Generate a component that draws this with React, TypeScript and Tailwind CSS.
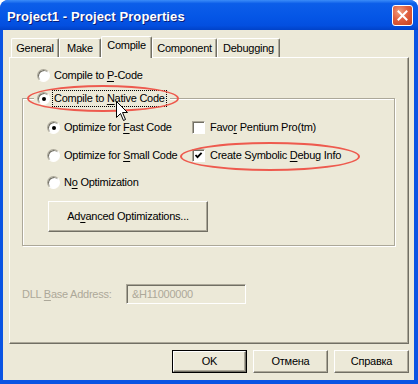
import React from "react";

const U = ({ children }: { children: React.ReactNode }) => (
  <span className="underline underline-offset-[2px] decoration-[1px]">{children}</span>
);

const Radio = ({ checked }: { checked?: boolean }) => (
  <span className="w-[13px] h-[13px] shrink-0 rounded-full bg-white border border-t-[#ACA899] border-l-[#ACA899] border-r-white border-b-white shadow-[inset_1px_1px_0_#716F64] flex items-center justify-center">
    {checked && <span className="w-[4px] h-[4px] rounded-full bg-black" />}
  </span>
);

const Check = ({ checked }: { checked?: boolean }) => (
  <span className="w-[13px] h-[13px] shrink-0 bg-white border border-t-[#ACA899] border-l-[#ACA899] border-r-white border-b-white shadow-[inset_1px_1px_0_#716F64] flex items-center justify-center">
    {checked && (
      <svg width="9" height="9" viewBox="0 0 9 9">
        <path d="M1.5 4 L3.5 6.2 L7.6 1.8" fill="none" stroke="#000" strokeWidth="1.8" />
      </svg>
    )}
  </span>
);

const Btn = ({ children, def, w }: { children: React.ReactNode; def?: boolean; w: string }) => (
  <div className={`${w} ${def ? "border border-black" : ""} flex`}>
    <div className="flex-1 flex items-center justify-center bg-[#ECE9D8] border border-t-white border-l-white border-r-[#716F64] border-b-[#716F64] shadow-[inset_-1px_-1px_0_#ACA899]">
      {children}
    </div>
  </div>
);

const Tab = ({ label, w, active }: { label: string; w: string; active?: boolean }) =>
  active ? (
    <div
      className={`${w} h-[22px] -mb-px relative z-10 bg-[#ECE9D8] border-t border-l border-white border-r border-r-[#716F64] rounded-t-[2px] shadow-[inset_-1px_0_0_#ACA899] flex justify-center pt-[2px]`}
    >
      {label}
    </div>
  ) : (
    <div
      className={`${w} h-[19px] mt-[2px] bg-[#ECE9D8] border-t border-l border-white border-r border-r-[#716F64] rounded-t-[2px] shadow-[inset_-1px_0_0_#ACA899] flex items-center justify-center`}
    >
      {label}
    </div>
  );

export default function App() {
  return (
    <div className="relative w-[418px] h-[384px] bg-[#0A54E3] rounded-t-[8px] flex flex-col text-[11px] leading-[13px] tracking-[-0.25px] text-black font-['Liberation_Sans',Arial,sans-serif] overflow-hidden">
      {/* title bar */}
      <div className="h-[30px] shrink-0 rounded-t-[8px] bg-[linear-gradient(180deg,#3b8cf8_0%,#0c5ee9_12%,#0556e6_55%,#034fe0_85%,#0142c8_100%)] flex items-center pl-[7px] pr-[5px]">
        <span className="text-white font-bold text-[13px] tracking-[0.1px] [text-shadow:1px_1px_0_#0a1e7a] mt-[2px]">
          Project1 - Project Properties
        </span>
        <div className="ml-auto w-[21px] h-[21px] mt-[1px] rounded-[3px] border border-white bg-[radial-gradient(circle_at_35%_30%,#f0a080_0%,#e06040_45%,#c8401c_100%)] flex items-center justify-center">
          <svg width="11" height="11" viewBox="0 0 11 11">
            <path d="M1.5 1.5 L9.5 9.5 M9.5 1.5 L1.5 9.5" stroke="#fff" strokeWidth="2" strokeLinecap="square" />
          </svg>
        </div>
      </div>

      {/* body */}
      <div className="ml-[3px] mr-[4px] mb-[4px] flex-1 bg-[#ECE9D8] flex flex-col pt-[6px]">
        {/* tabs */}
        <div className="flex pl-[8px] h-[21px]">
          <Tab label="General" w="w-[48px]" />
          <Tab label="Make" w="w-[42px]" />
          <Tab label="Compile" w="w-[51px]" active />
          <Tab label="Component" w="w-[65px]" />
          <Tab label="Debugging" w="w-[63px]" />
        </div>

        {/* tab panel */}
        <div className="ml-[6px] w-[400px] h-[287px] border-t border-l border-white border-r border-b border-r-[#716F64] border-b-[#716F64] shadow-[inset_-1px_-1px_0_#ACA899] flex flex-col">
          <div className="flex items-center gap-[4px] ml-[27px] mt-[11px]">
            <Radio />
            <span>
              Compile to <U>P</U>-Code
            </span>
          </div>

          <fieldset className="ml-[12px] mt-[8px] w-[373px] border border-[#ACA899] shadow-[inset_1px_1px_0_#fff,1px_1px_0_#fff] pb-[13px]">
            <legend className="ml-[11px] px-[3px] bg-[#ECE9D8] flex items-center">
              <Radio checked />
              <span className="ml-[2px] px-[1px] py-[1px] border border-dotted border-black">
                Compile to <U>N</U>ative Code
              </span>
            </legend>

            <div className="flex flex-col mt-[14px] pl-[24px]">
              <div className="flex items-center h-[13px]">
                <div className="w-[145px] flex items-center gap-[4px]">
                  <Radio checked />
                  <span>
                    Optimize for <U>F</U>ast Code
                  </span>
                </div>
                <div className="flex items-center gap-[5px]">
                  <Check />
                  <span>
                    Favo<U>r</U> Pentium Pro(tm)
                  </span>
                </div>
              </div>
              <div className="flex items-center h-[13px] mt-[15px]">
                <div className="w-[145px] flex items-center gap-[4px]">
                  <Radio />
                  <span>
                    Optimize for <U>S</U>mall Code
                  </span>
                </div>
                <div className="flex items-center gap-[5px]">
                  <Check checked />
                  <span>
                    Create Symbolic <U>D</U>ebug Info
                  </span>
                </div>
              </div>
              <div className="flex items-center h-[13px] mt-[14px] gap-[4px]">
                <Radio />
                <span>
                  N<U>o</U> Optimization
                </span>
              </div>
              <div className="mt-[12px] ml-[1px]">
                <Btn w="w-[160px] h-[31px]">
                  <span>
                    Ad<U>v</U>anced Optimizations...
                  </span>
                </Btn>
              </div>
            </div>
          </fieldset>

          <div className="flex items-center ml-[12px] mt-[38px] text-[#ACA899]">
            <span className="w-[104px]">
              DLL <U>B</U>ase Address:
            </span>
            <div className="w-[120px] h-[20px] border border-t-[#ACA899] border-l-[#ACA899] border-r-white border-b-white shadow-[inset_1px_1px_0_#716F64] flex items-center pl-[5px]">
              &amp;H11000000
            </div>
          </div>
        </div>

        {/* dialog buttons */}
        <div className="flex justify-end gap-[6px] mt-[6px] mr-[5px]">
          <Btn w="w-[75px] h-[23px]" def>
            OK
          </Btn>
          <Btn w="w-[75px] h-[23px]">Отмена</Btn>
          <Btn w="w-[75px] h-[23px]">Справка</Btn>
        </div>
      </div>

      {/* red highlight ellipses */}
      <div className="absolute left-[27px] top-[85px] w-[152px] h-[27px] rounded-[50%] border-2 border-[#EE5A4E]" />
      <div className="absolute left-[180px] top-[142px] w-[180px] h-[29px] rounded-[50%] border-2 border-[#EE5A4E]" />

      {/* mouse pointer */}
      <svg className="absolute left-[116px] top-[101px]" width="13" height="21" viewBox="0 0 13 21">
        <path d="M0.5 0.5 L0.5 16.5 L4.5 12.5 L7.5 19.5 L9.5 18.5 L6.5 11.5 L11.5 11.5 Z" fill="#fff" stroke="#000" strokeWidth="1" />
      </svg>
    </div>
  );
}
